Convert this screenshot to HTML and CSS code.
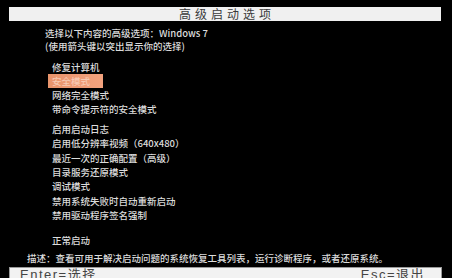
FILE: index.html
```html
<!DOCTYPE html>
<html lang="zh-CN">
<head>
<meta charset="utf-8">
<title>高级启动选项</title>
<link rel="stylesheet" href="styles.css">
</head>
<body>
<div class="screen">
  <div class="header">高级启动选项</div>
  <div class="intro">
    <div>选择以下内容的高级选项：Windows 7</div>
    <div>(使用箭头键以突出显示你的选择)</div>
  </div>
  <ul class="group group-first">
    <li>修复计算机</li>
    <li><span class="selected">安全模式</span></li>
    <li>网络完全模式</li>
    <li>带命令提示符的安全模式</li>
  </ul>
  <ul class="group">
    <li>启用启动日志</li>
    <li>启用低分辨率视频（640x480）</li>
    <li>最近一次的正确配置（高级）</li>
    <li>目录服务还原模式</li>
    <li>调试模式</li>
    <li>禁用系统失败时自动重新启动</li>
    <li>禁用驱动程序签名强制</li>
  </ul>
  <ul class="group group-last">
    <li>正常启动</li>
  </ul>
  <div class="desc">描述：查看可用于解决启动问题的系统恢复工具列表，运行诊断程序，或者还原系统。</div>
  <div class="footer">
    <span>Enter=选择</span>
    <span>Esc=退出</span>
  </div>
</div>
</body>
</html>
```

FILE: styles.css
```css
html, body {
  margin: 0;
  padding: 0;
  background: #000;
}

.screen {
  width: 452px;
  height: 278px;
  overflow: hidden;
  background: #000;
  color: #dcdcdc;
  font-family: "Noto Sans CJK SC", "Liberation Sans", sans-serif;
  font-size: 9.5px;
  font-weight: 500;
  display: flex;
  flex-direction: column;
}

.header {
  margin: 7px 11px 0 9px;
  height: 14px;
  line-height: 14px;
  background: #f0f0f0;
  color: #3a3a3a;
  font-size: 12px;
  font-weight: 400;
  letter-spacing: 4px;
  padding-left: 4px;
  text-align: center;
}

.intro {
  margin-top: 6px;
  padding-left: 45px;
  line-height: 13px;
}

.group {
  list-style: none;
  margin: 5.5px 0 0 0;
  padding: 0 0 0 52px;
  line-height: 14.3px;
}

.group-first {
  margin-top: 6.5px;
}

.group-last {
  margin-top: 11px;
}

.selected {
  display: inline-block;
  margin-left: -4px;
  padding: 0 13px 0 4px;
  background: linear-gradient(90deg, #e8946c, #f2a27e);
  color: #f6c9b2;
}

.desc {
  margin-top: 3px;
  padding-left: 27px;
  line-height: 14.3px;
}

.footer {
  margin: 2px 10px 0 9px;
  height: 14px;
  flex: none;
  background: #f2f2f2;
  border: 1px solid #9a9a9a;
  border-bottom: none;
  color: #444;
  font-family: "Liberation Sans", "Noto Sans CJK SC", sans-serif;
  font-size: 13px;
  font-weight: 400;
  letter-spacing: 1.5px;
  line-height: 14px;
  display: flex;
  justify-content: space-between;
  padding: 0 16px 0 10px;
}
```
